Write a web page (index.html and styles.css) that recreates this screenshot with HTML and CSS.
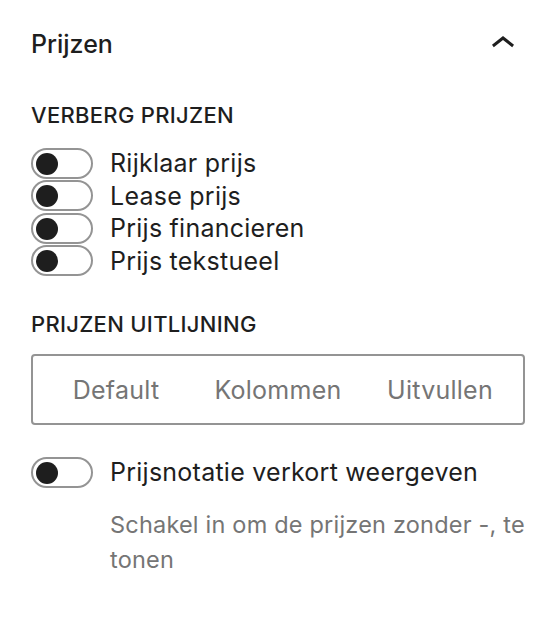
FILE: index.html
```html
<!DOCTYPE html>
<html lang="nl">
<head>
  <meta charset="UTF-8">
  <meta name="viewport" content="width=device-width, initial-scale=1.0">
  <link rel="stylesheet" href="styles.css">
  <title>Prijzen</title>
</head>
<body>
  <div class="panel">
    <div class="panel-header">
      <h2 class="panel-title">Prijzen</h2>
      <svg class="chevron" viewBox="0 0 24 24" width="48" height="48" aria-hidden="true">
        <path d="M6.5 12.4L12 8l5.5 4.4-.9 1.2L12 10l-4.6 3.6-.9-1.2z"></path>
      </svg>
    </div>

    <div class="section-label">Verberg prijzen</div>
    <div class="toggle-list">
      <label class="toggle-row"><span class="toggle"></span>Rijklaar prijs</label>
      <label class="toggle-row"><span class="toggle"></span>Lease prijs</label>
      <label class="toggle-row"><span class="toggle"></span>Prijs financieren</label>
      <label class="toggle-row"><span class="toggle"></span>Prijs tekstueel</label>
    </div>

    <div class="section-label second">Prijzen uitlijning</div>
    <div class="segmented">
      <button class="segment">Default</button>
      <button class="segment">Kolommen</button>
      <button class="segment">Uitvullen</button>
    </div>

    <label class="toggle-row single"><span class="toggle"></span>Prijsnotatie verkort weergeven</label>
    <p class="help">Schakel in om de prijzen zonder -, te tonen</p>
  </div>
</body>
</html>
```

FILE: styles.css
```css
body {
  font-family: 'Inter', 'Noto Sans', sans-serif;
  background-color: #fff;
  color: #1e1e1e;
  margin: 0;
}

.panel {
  padding: 0 31px 0 31px;
}

.panel-header {
  display: flex;
  align-items: center;
  justify-content: space-between;
  height: 88px;
}

.panel-title {
  margin: 0;
  font-size: 25px;
  font-weight: 500;
}

.chevron {
  fill: #1e1e1e;
  margin-right: -2px;
}

.section-label {
  font-size: 22px;
  font-weight: 500;
  letter-spacing: 0.3px;
  text-transform: uppercase;
  line-height: 28px;
  margin-top: 13px;
}

.section-label.second {
  margin-top: 33px;
}

.toggle-list {
  margin-top: 18px;
}

.toggle-row {
  display: flex;
  align-items: center;
  gap: 17px;
  height: 32.5px;
  font-size: 25px;
  letter-spacing: 0.25px;
}

.toggle {
  position: relative;
  flex-shrink: 0;
  width: 62px;
  height: 31px;
  box-sizing: border-box;
  border: 2px solid #949494;
  border-radius: 16px;
  background-color: #fff;
}

.toggle::after {
  content: "";
  position: absolute;
  top: 3px;
  left: 3px;
  width: 22px;
  height: 22px;
  border-radius: 50%;
  background-color: #1e1e1e;
}

.segmented {
  display: grid;
  grid-template-columns: repeat(3, 1fr);
  height: 71px;
  margin-top: 16px;
  padding: 0 2px;
  box-sizing: border-box;
  border: 2px solid #949494;
  border-radius: 4px;
}

.segment {
  background: none;
  border: none;
  font-family: inherit;
  font-size: 25px;
  letter-spacing: 0.25px;
  color: #757575;
  cursor: pointer;
}

.toggle-row.single {
  margin-top: 31px;
}

.help {
  margin: 18px -20px 0 79px;
  font-size: 23.5px;
  letter-spacing: 0.2px;
  line-height: 35px;
  color: #757575;
}
```
